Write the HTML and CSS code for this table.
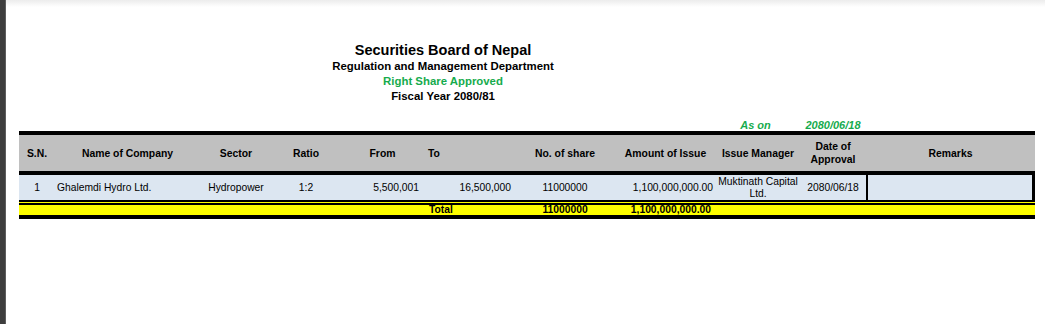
FILE: index.html
```html
<!DOCTYPE html>
<html>
<head>
<meta charset="utf-8">
<title>Right Share Approved</title>
<link rel="stylesheet" href="styles.css">
</head>
<body>
<div class="page">
  <div class="strip"></div>
  <div class="content">
    <div class="titles">
      <div class="t1">Securities Board of Nepal</div>
      <div class="t2">Regulation and Management Department</div>
      <div class="t2 green">Right Share Approved</div>
      <div class="t2">Fiscal Year 2080/81</div>
    </div>
    <table class="report">
      <colgroup>
        <col class="c-sn"><col class="c-name"><col class="c-sector"><col class="c-ratio">
        <col class="c-from"><col class="c-to"><col class="c-no"><col class="c-amt">
        <col class="c-mgr"><col class="c-date"><col class="c-rem">
      </colgroup>
      <tr class="ason">
        <td></td><td></td><td></td><td></td><td></td><td></td><td></td><td></td>
        <td class="center">As on</td><td class="center">2080/06/18</td><td></td>
      </tr>
      <tr class="head">
        <th>S.N.</th>
        <th>Name of Company</th>
        <th>Sector</th>
        <th>Ratio</th>
        <th>From</th>
        <th class="to-h">To</th>
        <th>No. of share</th>
        <th>Amount of Issue</th>
        <th>Issue Manager</th>
        <th>Date of<br>Approval</th>
        <th class="rem-h">Remarks</th>
      </tr>
      <tr class="data">
        <td class="center">1</td>
        <td class="name">Ghalemdi Hydro Ltd.</td>
        <td class="center">Hydropower</td>
        <td class="center">1:2</td>
        <td class="from">5,500,001</td>
        <td class="to">16,500,000</td>
        <td class="center">11000000</td>
        <td class="amt">1,100,000,000.00</td>
        <td class="center mgr">Muktinath Capital<br>Ltd.</td>
        <td class="center">2080/06/18</td>
        <td class="rem"></td>
      </tr>
      <tr class="total">
        <td></td><td></td><td></td><td></td><td></td>
        <td class="tot-label">Total</td>
        <td class="center">11000000</td>
        <td class="amt-t">1,100,000,000.00</td>
        <td></td><td></td><td></td>
      </tr>
    </table>
  </div>
</div>
</body>
</html>
```
FILE: styles.css
```css
html, body {
  margin: 0;
  padding: 0;
  background: #ffffff;
}
body {
  font-family: "Liberation Sans", Arial, sans-serif;
  color: #000;
}
.page {
  display: flex;
  width: 1045px;
  height: 324px;
  overflow: hidden;
}
.strip {
  width: 5px;
  flex: none;
  background: #3d3d3d;
  border-right: 1px solid #5e5e5e;
}
.content {
  flex: 1;
  padding: 42px 0 0 13px;
  background: linear-gradient(to bottom, #ececec 0px, #ffffff 7px);
}
.titles {
  width: 848px;
  text-align: center;
  font-weight: bold;
}
.t1 {
  font-size: 14.5px;
  line-height: 17px;
}
.t2 {
  font-size: 11.4px;
  line-height: 15px;
}
.green {
  color: #16ab4d;
}
.report {
  margin-top: 16px;
  width: 1016px;
  table-layout: fixed;
  border-collapse: separate;
  border-spacing: 0;
  font-size: 10.3px;
}
.c-sn { width: 36px; }
.c-name { width: 145px; }
.c-sector { width: 72px; }
.c-ratio { width: 68px; }
.c-from { width: 85px; }
.c-to { width: 90px; }
.c-no { width: 100px; }
.c-amt { width: 101px; }
.c-mgr { width: 84px; }
.c-date { width: 66px; }
.c-rem { width: 169px; }

.report td, .report th {
  padding: 0;
  white-space: nowrap;
  overflow: visible;
}
.center { text-align: center; }

.ason td {
  height: 11px;
  line-height: 11px;
  font-size: 11px;
  font-weight: bold;
  font-style: italic;
  color: #16ab4d;
  vertical-align: bottom;
}
.ason td:nth-child(9) { padding-right: 5px; }
.head th {
  height: 36px;
  background: #c0c0c0;
  border-top: 4px solid #000;
  border-bottom: 4px solid #000;
  font-size: 10.4px;
  line-height: 13px;
  font-weight: bold;
  text-align: center;
  vertical-align: middle;
}
.head .to-h {
  text-align: left;
  padding-left: 3px;
}
.data td {
  height: 25px;
  background: #dce6f1;
  line-height: 12px;
  vertical-align: middle;
}
.data .name { padding-left: 2px; }
.data .from { text-align: right; padding-right: 6px; }
.data .to { text-align: right; padding-right: 4px; }
.data .amt { text-align: right; padding-right: 3px; }
.data .mgr { line-height: 12px; }
.data .rem {
  border-left: 2px solid #000;
  border-right: 3px solid #000;
}
.total td {
  height: 10px;
  background: #ffff00;
  border-top: 5px double #000;
  border-bottom: 4px solid #000;
  font-weight: bold;
  line-height: 10px;
  vertical-align: middle;
}
.total .tot-label {
  padding-left: 4px;
}
.total .amt-t {
  text-align: right;
  padding-right: 5px;
}
```
